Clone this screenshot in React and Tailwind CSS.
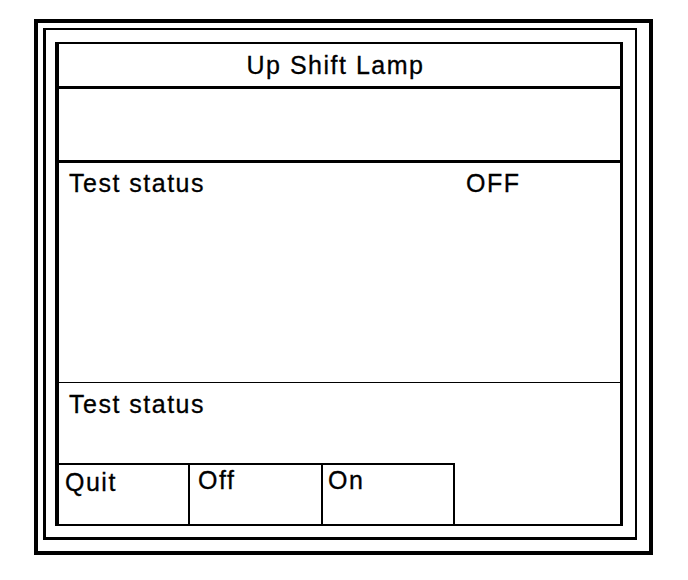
export default function App() {
  const font = { fontFamily: '"Liberation Sans", Arial, sans-serif' };
  return (
    <div className="w-[688px] h-[580px] bg-white text-black pt-[19px] pl-[34px]" style={font}>
      <div className="w-[619px] h-[536px] border-4 border-black pt-[5px] pl-[5px]">
        <div className="w-[594px] h-[512px] border-l-[3px] border-t-2 border-r-2 border-b-[3px] border-black pt-[12px] pl-[9px]">
          <div className="w-[568px] h-[484px] border-l-4 border-t-2 border-r-[3px] border-b-2 border-black flex flex-col text-[25px] tracking-[1.5px] [-webkit-text-stroke:0.3px_black]">
            <div className="h-[45px] border-b-[3px] border-black flex justify-center leading-[42px] pr-[8px]">
              Up Shift Lamp
            </div>
            <div className="h-[74px] border-b-[3px] border-black" />
            <div className="h-[220px] border-b border-black flex pt-[6px] pl-[10px] leading-[29px]">
              <div className="w-[397px]">Test status</div>
              <div>OFF</div>
            </div>
            <div className="h-[80px] pt-[7px] pl-[10px] leading-[29px]">Test status</div>
            <div className="flex-1 flex">
              <div className="flex border-t-2 border-black leading-[29px] -ml-[3px] pl-[3px]">
                <div className="w-[131px] border-r-2 border-black pt-[3px] pl-[6px]">Quit</div>
                <div className="w-[133px] border-r-2 border-black pt-[1px] pl-[8px]">Off</div>
                <div className="w-[132px] border-r-2 border-black pt-[1px] pl-[5px]">On</div>
              </div>
            </div>
          </div>
        </div>
      </div>
    </div>
  );
}
